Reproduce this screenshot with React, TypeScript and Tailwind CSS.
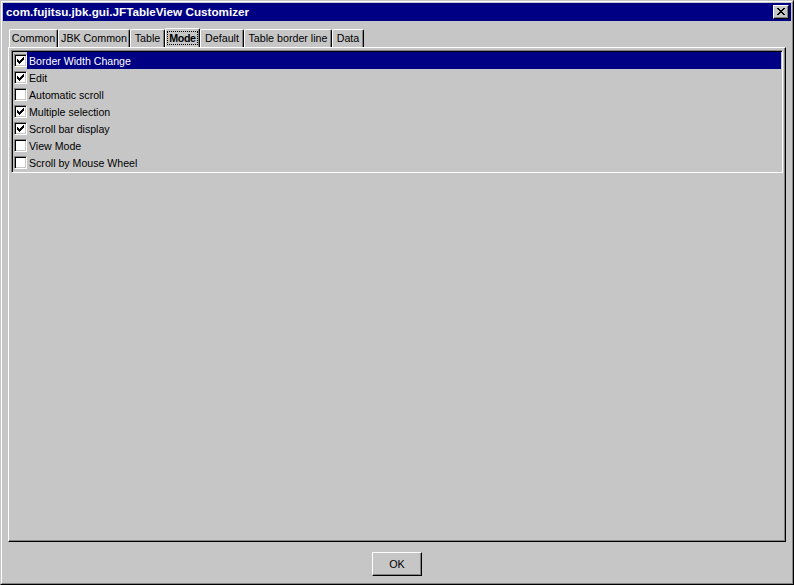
import React from "react";

function CheckMark() {
  const px: [number, number][] = [
    [6, 0],
    [5, 1], [6, 1],
    [0, 2], [4, 2], [5, 2], [6, 2],
    [0, 3], [1, 3], [3, 3], [4, 3], [5, 3],
    [0, 4], [1, 4], [2, 4], [3, 4], [4, 4],
    [1, 5], [2, 5], [3, 5],
    [2, 6],
  ];
  return (
    <svg width="7" height="7" viewBox="0 0 7 7" shapeRendering="crispEdges">
      {px.map(([x, y], i) => (
        <rect key={i} x={x} y={y} width="1" height="1" fill="#000" />
      ))}
    </svg>
  );
}

function CloseGlyph() {
  const rows = [
    "XX....XX",
    ".XX..XX.",
    "..XXXX..",
    "...XX...",
    "..XXXX..",
    ".XX..XX.",
    "XX....XX",
  ];
  const rects: React.ReactElement[] = [];
  rows.forEach((r, y) =>
    r.split("").forEach((c, x) => {
      if (c === "X") rects.push(<rect key={`${x}-${y}`} x={x} y={y} width="1" height="1" fill="#000" />);
    })
  );
  return (
    <svg width="8" height="7" viewBox="0 0 8 7" shapeRendering="crispEdges">
      {rects}
    </svg>
  );
}

function Checkbox({ checked }: { checked: boolean }) {
  return (
    <div className="w-[13px] h-[13px] border border-t-[#848484] border-l-[#848484] border-r-white border-b-white shrink-0">
      <div className="w-full h-full bg-white shadow-[inset_1px_1px_0_#000,inset_-1px_-1px_0_#c6c6c6] flex items-center justify-center">
        {checked && <CheckMark />}
      </div>
    </div>
  );
}

const tabs = [
  { label: "Common", w: "w-[49px]" },
  { label: "JBK Common", w: "w-[72px]" },
  { label: "Table", w: "w-[35px]" },
  { label: "Mode", w: "w-[35px]", selected: true },
  { label: "Default", w: "w-[44px]" },
  { label: "Table border line", w: "w-[88px]" },
  { label: "Data", w: "w-[32px]" },
];

const items = [
  { label: "Border Width Change", checked: true, selected: true },
  { label: "Edit", checked: true },
  { label: "Automatic scroll", checked: false },
  { label: "Multiple selection", checked: true },
  { label: "Scroll bar display", checked: true },
  { label: "View Mode", checked: false },
  { label: "Scroll by Mouse Wheel", checked: false },
];

export default function App() {
  return (
    <div className="w-[794px] h-[585px] border border-t-[#c6c6c6] border-l-[#c6c6c6] border-r-black border-b-black font-['Liberation_Sans',Arial,sans-serif] text-black">
      <div className="h-full border border-t-white border-l-white border-r-[#848484] border-b-[#848484] p-px flex flex-col bg-[#c6c6c6]">
        {/* Title bar */}
        <div className="h-[18px] bg-[#000084] flex items-center justify-between pl-[3px] pr-[2px] shrink-0">
          <span className="text-white font-bold text-[11.7px] leading-none">
            com.fujitsu.jbk.gui.JFTableView Customizer
          </span>
          <div className="w-[16px] h-[14px] border border-t-white border-l-white border-r-black border-b-black bg-[#c6c6c6] shadow-[inset_-1px_-1px_0_#848484] flex items-center justify-center pb-[1px]">
            <CloseGlyph />
          </div>
        </div>

        {/* Tabbed pane */}
        <div className="px-[5px] pt-[7px] flex flex-col">
          <div className="flex h-[19px] pl-[1px] items-end">
            {tabs.map((t) => (
              <div
                key={t.label}
                className={`${t.w} ${t.selected ? "h-[19px]" : "h-[18px]"} border-l border-t border-r border-l-white border-t-white border-r-black rounded-t-[2px] shadow-[inset_-1px_0_0_#848484] flex justify-center ${t.selected ? "pt-[3px]" : "pt-[2px]"} text-[10.7px] leading-[12px] whitespace-nowrap`}
              >
                {t.selected ? (
                  <span className="font-bold border border-dotted border-black px-[1px] h-[14px] -mt-[1px] tracking-[-0.4px]">
                    {t.label}
                  </span>
                ) : (
                  <span>{t.label}</span>
                )}
              </div>
            ))}
          </div>
          <div className="h-[495px] border border-t-white border-l-white border-r-black border-b-black shadow-[inset_-1px_-1px_0_#848484] pl-[2px] pr-[2px] pt-[2px]">
            <div className="border border-t-[#848484] border-l-[#848484] border-r-white border-b-white">
              <div className="shadow-[inset_1px_1px_0_#000,inset_-1px_-1px_0_#c6c6c6] p-px">
                {items.map((it) => (
                  <div key={it.label} className="h-[17px] flex items-center">
                    <div className="pl-[1px]">
                      <Checkbox checked={it.checked} />
                    </div>
                    <div
                      className={`flex-1 h-full flex items-center pl-[2px] pt-[2px] text-[10.6px] ${
                        it.selected ? "bg-[#000084] text-white" : ""
                      }`}
                    >
                      {it.label}
                    </div>
                  </div>
                ))}
              </div>
            </div>
          </div>
        </div>

        {/* Footer */}
        <div className="flex-1 flex justify-center pt-[10px]">
          <div className="w-[50px] h-[24px] border border-t-white border-l-white border-r-black border-b-black shadow-[inset_-1px_-1px_0_#848484] flex items-center justify-center pt-[1px] text-[10.8px]">
            OK
          </div>
        </div>
      </div>
    </div>
  );
}
